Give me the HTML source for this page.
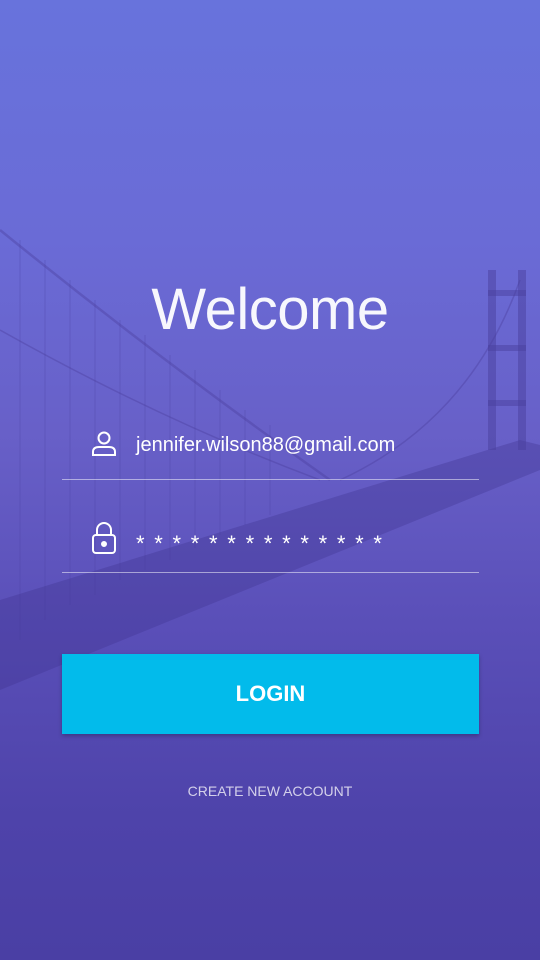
<!DOCTYPE html>
<html><head><style>
html,body{margin:0;padding:0}
body{width:540px;height:960px;overflow:hidden;position:relative;font-family:"Liberation Sans",sans-serif;
background:linear-gradient(180deg,#6873dc 0%,#6a6bd6 25%,#6860c8 45%,#5a4fb8 65%,#4e43aa 85%,#4a3fa4 100%);}
svg.bg{position:absolute;left:0;top:0}
.t{position:absolute;color:#fff}
</style></head><body>
<svg class="bg" width="540" height="960">
<g fill="none" stroke="#4a3f9e" stroke-opacity="0.4">
<path d="M0 230 Q160 360 330 480" stroke-width="2.5"/>
<path d="M0 330 Q160 420 320 480" stroke-width="1.5"/>
<path d="M520 280 Q470 420 340 480" stroke-width="1.5"/>
</g>
<g stroke="#4a3f9e" stroke-opacity="0.25" stroke-width="1.2">
<path d="M20 240V640M45 260V620M70 280V605M95 300V595M120 320V580M145 335V570M170 355V560M195 370V548M220 390V535M245 410V525M270 425V515"/>
</g>
<path d="M0 600 L520 440 L540 445 L540 470 L0 690Z" fill="#3f3590" fill-opacity="0.35"/>
<g fill="#4a3f9e" fill-opacity="0.5"><rect x="488" y="270" width="8" height="180"/><rect x="518" y="270" width="8" height="180"/><rect x="488" y="290" width="38" height="6"/><rect x="488" y="345" width="38" height="6"/><rect x="488" y="400" width="38" height="6"/></g>
</svg>
<div class="t" style="left:0;width:540px;top:276px;text-align:center;font-size:58px;letter-spacing:-0.5px;color:rgba(255,255,255,0.95)">Welcome</div>
<svg style="position:absolute;left:90px;top:430px" width="28" height="28" viewBox="0 0 28 28" fill="none" stroke="#fff" stroke-width="2"><circle cx="14" cy="8" r="5.5"/><path d="M3 25 V22 Q3 17 9 17 H19 Q25 17 25 22 V25 Z"/></svg>
<div class="t" style="left:136px;top:434px;font-size:20px">jennifer.wilson88@gmail.com</div>
<div style="position:absolute;left:62px;top:479px;width:417px;height:1px;background:rgba(255,255,255,0.5)"></div>
<svg style="position:absolute;left:90px;top:521px" width="28" height="34" viewBox="0 0 28 34" fill="none" stroke="#fff" stroke-width="2"><path d="M7 14V9a7 7 0 0 1 14 0v5"/><rect x="3" y="14" width="22" height="18" rx="3"/><circle cx="14" cy="23" r="2" fill="#fff"/></svg>
<div class="t" style="left:136px;top:531px;font-size:22px;letter-spacing:9.7px">**************</div>
<div style="position:absolute;left:62px;top:572px;width:417px;height:1px;background:rgba(255,255,255,0.5)"></div>
<div class="t" style="left:62px;top:654px;width:417px;height:80px;background:#02bbeb;box-shadow:0 2px 4px rgba(0,0,0,0.25);text-align:center;line-height:80px;font-size:22px;font-weight:bold">LOGIN</div>
<div class="t" style="left:0;width:540px;top:783px;text-align:center;font-size:14px;color:rgba(255,255,255,0.75)">CREATE NEW ACCOUNT</div>
</body></html>
